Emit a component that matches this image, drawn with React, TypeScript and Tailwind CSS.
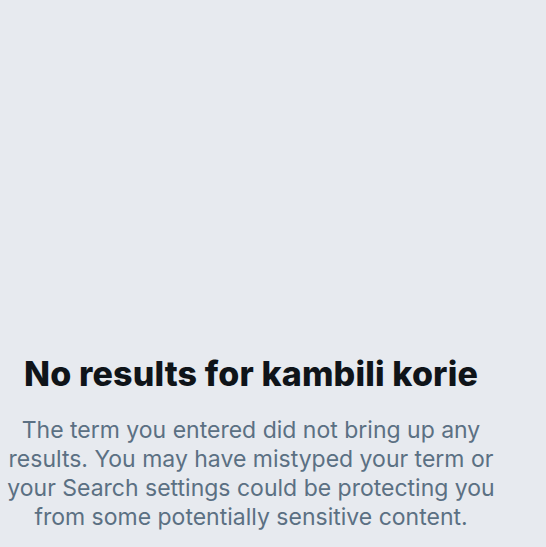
export default function App(): JSX.Element {
  return (
    <div
      className="h-[547px] w-full overflow-hidden bg-[#e7eaef]"
      style={{ fontFamily: 'Inter, "Noto Sans", sans-serif' }}
    >
      <div className="flex w-[502px] flex-col items-center px-1 pt-[352px] text-center">
        <h1 className="text-[34px] font-extrabold leading-[44px] tracking-[0.15px] text-[#0f1419]">
          No results for kambili korie
        </h1>
        <p className="mt-[20px] text-[23px] leading-[29px] text-[#5b7083]">
          The term you entered did not bring up any results. You may have mistyped your term or
          your Search settings could be protecting you from some potentially sensitive content.
        </p>
      </div>
    </div>
  )
}
